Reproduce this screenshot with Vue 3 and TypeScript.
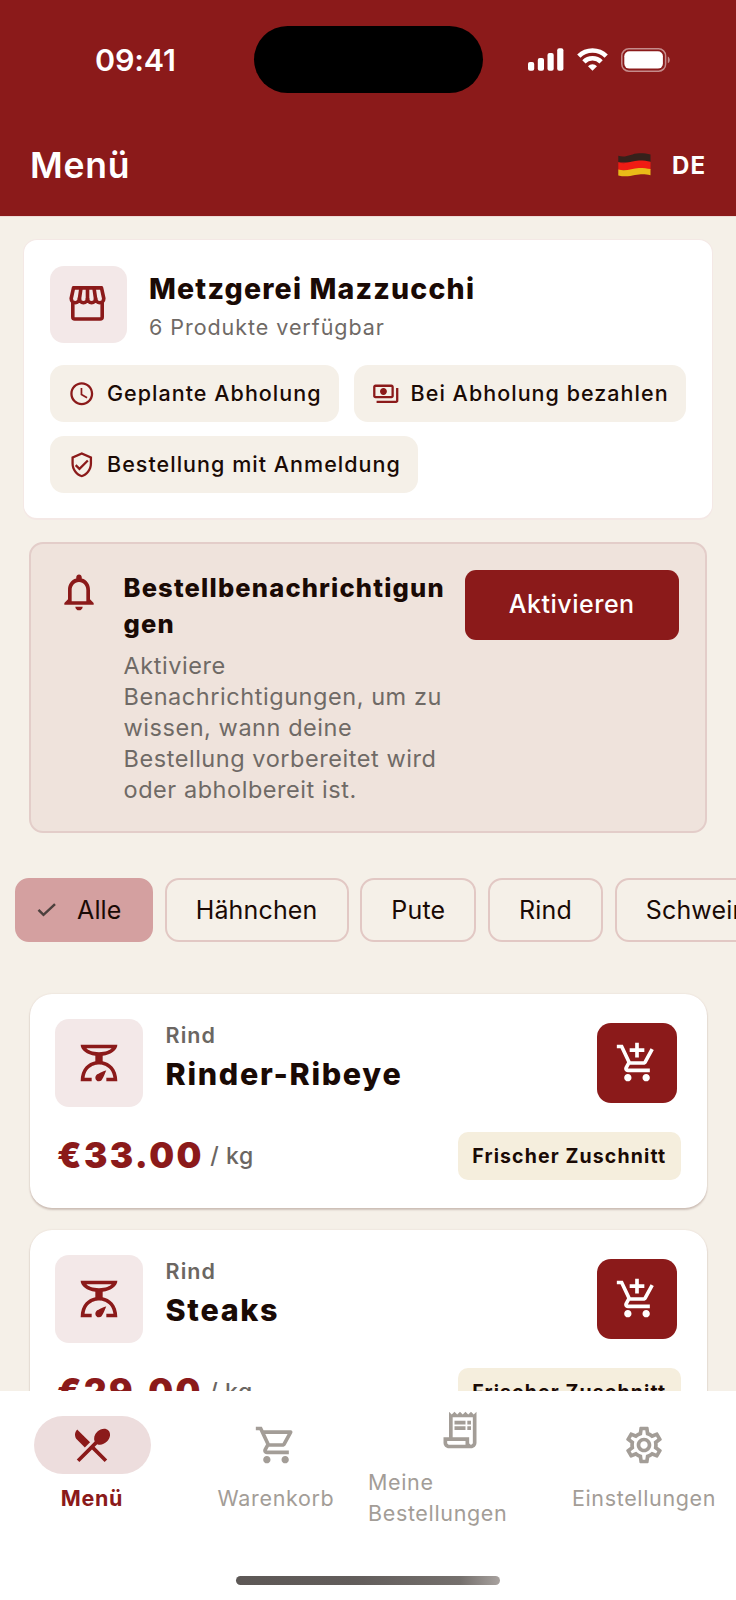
<script setup lang="ts">
interface Product {
  category: string
  name: string
  price: string
}

const icons = {
  clock:
    'M11.99 2C6.47 2 2 6.48 2 12s4.47 10 9.99 10C17.52 22 22 17.52 22 12S17.52 2 11.99 2zM12 20c-4.42 0-8-3.58-8-8s3.58-8 8-8 8 3.58 8 8-3.58 8-8 8zM12.5 7H11v6l5.25 3.15.75-1.23-4.5-2.67z',
  cash:
    'M19 14V6c0-1.1-.9-2-2-2H3c-1.1 0-2 .9-2 2v8c0 1.1.9 2 2 2h14c1.1 0 2-.9 2-2zm-2 0H3V6h14v8zm-7-7c-1.66 0-3 1.34-3 3s1.34 3 3 3 3-1.34 3-3-1.34-3-3-3zm13 0v11c0 1.1-.9 2-2 2H4v-2h17V7h2z',
  shield:
    'M12 1L3 5v6c0 5.55 3.84 10.74 9 12 5.16-1.26 9-6.45 9-12V5l-9-4zm7 10c0 4.52-2.98 8.69-7 9.93-4.02-1.24-7-5.41-7-9.93V6.3l7-3.11 7 3.11V11zm-11.59.59L6 13l4 4 8-8-1.41-1.42L10 14.17z',
  bell:
    'M12 22c1.1 0 2-.9 2-2h-4c0 1.1.9 2 2 2zm6-6v-5c0-3.07-1.63-5.64-4.5-6.32V4c0-.83-.67-1.5-1.5-1.5s-1.5.67-1.5 1.5v.68C7.64 5.36 6 7.92 6 11v5l-2 2v1h16v-1l-2-2zm-2 1H8v-6c0-2.48 1.51-4.5 4-4.5s4 2.02 4 4.5v6z',
  scale:
    'M14 11V8c4.56-.58 8-3.1 8-6H2c0 2.9 3.44 5.42 8 6v3c-3.68.73-8 3.61-8 11h6v-2H4.13c.93-6.83 6.65-7.2 7.87-7.2s6.94.37 7.87 7.2H16v2h6c0-7.39-4.32-10.27-8-11zM18.87 4c-.89 1-3.25 2.16-6.87 2.16S6.02 5 5.13 4h13.74zM12 22c-1.1 0-2-.9-2-2 0-.55.22-1.05.59-1.41C11.39 17.79 16 16 16 16s-1.79 4.61-2.59 5.41c-.36.37-.86.59-1.41.59z',
  addCart:
    'M11 9h2V6h3V4h-3V1h-2v3H8v2h3v3zm-4 9c-1.1 0-1.99.9-1.99 2S5.9 22 7 22s2-.9 2-2-.9-2-2-2zm10 0c-1.1 0-1.99.9-1.99 2s.89 2 1.99 2 2-.9 2-2-.9-2-2-2zm-8.9-5h7.45c.75 0 1.41-.41 1.75-1.03l3.86-7.01L19.42 4l-3.87 7H8.53L4.27 2H1v2h2l3.6 7.59-1.35 2.44C4.52 15.37 5.48 17 7 17h12v-2H7l1.1-2z',
  menu:
    'M8.1 13.34l2.83-2.83L3.91 3.5c-1.56 1.56-1.56 4.09 0 5.66l4.19 4.18zm6.78-1.81c1.53.71 3.68.21 5.27-1.38 1.91-1.91 2.28-4.65.81-6.12-1.46-1.46-4.2-1.1-6.12.81-1.59 1.59-2.09 3.74-1.38 5.27L3.7 19.87l1.41 1.41L12 14.41l6.88 6.88 1.41-1.41L13.41 13l1.47-1.47z',
  cart:
    'M15.55 13c.75 0 1.41-.41 1.75-1.03l3.58-6.49c.37-.66-.11-1.48-.87-1.48H5.21l-.94-2H1v2h2l3.6 7.59-1.35 2.44C4.52 15.37 5.48 17 7 17h12v-2H7l1.1-2h7.45zM6.16 6h12.15l-2.76 5H8.53L6.16 6zM7 18c-1.1 0-1.99.9-1.99 2S5.9 22 7 22s2-.9 2-2-.9-2-2-2zm10 0c-1.1 0-1.99.9-1.99 2s.89 2 1.99 2 2-.9 2-2-.9-2-2-2z',
  receipt:
    'M19.5 3.5L18 2l-1.5 1.5L15 2l-1.5 1.5L12 2l-1.5 1.5L9 2 7.5 3.5 6 2v14H3v3c0 1.66 1.34 3 3 3h12c1.66 0 3-1.34 3-3V2l-1.5 1.5zM15 20H6c-.55 0-1-.45-1-1v-1h10v2zm4-1c0 .55-.45 1-1 1s-1-.45-1-1v-3H8V5h11v14zM9 7h6v2H9zM16 7h2v2h-2zM9 10h6v2H9zM16 10h2v2h-2z',
  gear:
    'M19.43 12.98c.04-.32.07-.64.07-.98 0-.34-.03-.66-.07-.98l2.11-1.65c.19-.15.24-.42.12-.64l-2-3.46c-.09-.16-.26-.25-.44-.25-.06 0-.12.01-.17.03l-2.49 1c-.52-.4-1.08-.73-1.69-.98l-.38-2.65C14.46 2.18 14.25 2 14 2h-4c-.25 0-.46.18-.49.42l-.38 2.65c-.61.25-1.17.59-1.69.98l-2.49-1c-.06-.02-.12-.03-.18-.03-.17 0-.34.09-.43.25l-2 3.46c-.13.22-.07.49.12.64l2.11 1.65c-.04.32-.07.65-.07.98 0 .33.03.66.07.98l-2.11 1.65c-.19.15-.24.42-.12.64l2 3.46c.09.16.26.25.44.25.06 0 .12-.01.17-.03l2.49-1c.52.4 1.08.73 1.69.98l.38 2.65c.03.24.24.42.49.42h4c.25 0 .46-.18.49-.42l.38-2.65c.61-.25 1.17-.59 1.69-.98l2.49 1c.06.02.12.03.18.03.17 0 .34-.09.43-.25l2-3.46c.12-.22.07-.49-.12-.64l-2.11-1.65zm-1.98-1.71c.04.31.05.52.05.73 0 .21-.02.43-.05.73l-.14 1.13.89.7 1.08.84-.7 1.21-1.27-.51-1.04-.42-.9.68c-.43.32-.84.56-1.25.73l-1.06.43-.16 1.13-.2 1.35h-1.4l-.19-1.35-.16-1.13-1.06-.43c-.43-.18-.83-.41-1.23-.71l-.91-.7-1.06.43-1.27.51-.7-1.21 1.08-.84.89-.7-.14-1.13c-.03-.31-.05-.54-.05-.74s.02-.43.05-.73l.14-1.13-.89-.7-1.08-.84.7-1.21 1.27.51 1.04.42.9-.68c.43-.32.84-.56 1.25-.73l1.06-.43.16-1.13.2-1.35h1.39l.19 1.35.16 1.13 1.06.43c.43.18.83.41 1.23.71l.91.7 1.06-.43 1.27-.51.7 1.21-1.07.85-.89.7.14 1.13zM12 8c-2.21 0-4 1.79-4 4s1.79 4 4 4 4-1.79 4-4-1.79-4-4-4zm0 6c-1.1 0-2-.9-2-2s.9-2 2-2 2 .9 2 2-.9 2-2 2z',
}

const features = [
  { icon: icons.clock, label: 'Geplante Abholung' },
  { icon: icons.cash, label: 'Bei Abholung bezahlen' },
  { icon: icons.shield, label: 'Bestellung mit Anmeldung' },
]

const categories = ['Hähnchen', 'Pute', 'Rind', 'Schwein']

const products: Product[] = [
  { category: 'Rind', name: 'Rinder-Ribeye', price: '33.00' },
  { category: 'Rind', name: 'Steaks', price: '29.00' },
]

const tabs = [
  { icon: icons.menu, label: 'Menü', active: true },
  { icon: icons.cart, label: 'Warenkorb', active: false },
  { icon: icons.receipt, label: 'Meine Bestellungen', active: false },
  { icon: icons.gear, label: 'Einstellungen', active: false },
]
</script>

<template>
  <div class="screen">
    <header class="header">
      <div class="status">
        <span class="time">09:41</span>
        <span class="island"></span>
        <span class="indicators">
          <svg class="signal" width="36" height="23" viewBox="0 0 36 23">
            <rect x="0" y="14" width="6.2" height="8.8" rx="2" />
            <rect x="9.8" y="10" width="6.2" height="12.8" rx="2" />
            <rect x="19.5" y="5" width="6.2" height="17.8" rx="2" />
            <rect x="29.2" y="0.2" width="6.2" height="22.6" rx="2" />
          </svg>
          <svg class="wifi" width="31" height="23" viewBox="0 0 31 23">
            <g fill="none" stroke="#fff" stroke-width="4.6">
              <path d="M1.8 8.2a19.4 19.4 0 0 1 27.4 0" />
              <path d="M6.9 13.8a12.2 12.2 0 0 1 17.2 0" />
            </g>
            <path d="M15.5 22.8L11 18.2a6.4 6.4 0 0 1 9 0z" fill="#fff" />
          </svg>
          <svg class="battery" width="50" height="24" viewBox="0 0 50 24">
            <rect x=".8" y=".8" width="43.8" height="22.4" rx="7" fill="none" stroke="#c58b8b" stroke-width="1.5" />
            <rect x="3.3" y="3.2" width="38.6" height="17.4" rx="5" fill="#fff" />
            <path d="M46.8 8.4c2.6 1.3 2.6 5.6 0 6.9z" fill="#c58b8b" />
          </svg>
        </span>
      </div>
      <div class="title-row">
        <h1>Menü</h1>
        <div class="language">
          <svg width="33" height="24" viewBox="0 0 33 24">
            <path d="M.3 2.8C8 5.5 13 .6 21 .3c5-.1 8 .5 11.5 1.1V9H.3z" fill="#35211b" />
            <path d="M.3 9.3C8 12 14 7.6 21 7.5c5 0 8 .6 11.5 1.2V17H.3z" fill="#f01c14" />
            <path d="M.3 16.6C8 18.8 14 15.3 21 15c5 0 8 .5 11.5 1v6.2c-6-1.4-9.5-1.4-15.500-.1-6 1.400-11 1.800-16.700.3z" fill="#e9bb18" />
          </svg>
          <span>DE</span>
        </div>
      </div>
    </header>

    <main class="content">
      <section class="shop">
        <div class="shop-head">
          <span class="shop-icon">
            <svg width="37" height="35" viewBox="0 0 37 35">
              <g fill="none" stroke="currentColor" stroke-width="3.6" stroke-linejoin="round">
                <path d="M4.500 1.900h28L34.800 12.500a4 4.300 0 0 1-8.150 0a4.080 4.300 0 0 1-8.150 0a4.080 4.300 0 0 1-8.150 0a4.080 4.300 0 0 1-8.150 0z" stroke="none" />
                <path d="M4.500 1.900h28L34.800 12.500a4.070 4.300 0 0 1-8.150 0a4.070 4.300 0 0 1-8.150 0a4.070 4.300 0 0 1-8.150 0a4.070 4.300 0 0 1-8.150 0z" />
                <path d="M12 2l-1.600 11M18.500 2v11M25 2l1.600 11" />
                <path d="M3.800 16v15q0 2 2 2h25.400q2 0 2-2V16" />
              </g>
            </svg>
          </span>
          <div class="shop-text">
            <h2>Metzgerei Mazzucchi</h2>
            <p>6 Produkte verfügbar</p>
          </div>
        </div>
        <div class="features">
          <span v-for="f in features" :key="f.label" class="feature">
            <svg viewBox="0 0 24 24"><path :d="f.icon" /></svg><span>{{ f.label }}</span>
          </span>
        </div>
      </section>

      <section class="notice">
        <svg class="icon" viewBox="0 0 24 24"><path :d="icons.bell" /></svg>
        <div class="notice-text">
          <h3>Bestellbenachrichtigungen</h3>
          <p>Aktiviere Benachrichtigungen, um zu wissen, wann deine Bestellung vorbereitet wird oder abholbereit ist.</p>
        </div>
        <button type="button" class="activate">Aktivieren</button>
      </section>

      <nav class="filters">
        <span class="filter selected">
          <svg width="20" height="14" viewBox="0 0 20 14">
            <path d="M1.5 6.8l5 5L18 1.2" fill="none" stroke="#4c403d" stroke-width="2.5" />
          </svg>
          Alle
        </span>
        <span v-for="c in categories" :key="c" class="filter">{{ c }}</span>
      </nav>

      <section class="products">
        <article v-for="p in products" :key="p.name" class="product">
          <div class="product-head">
            <span class="product-icon">
              <svg class="icon" viewBox="0 0 24 24"><path :d="icons.scale" /></svg>
            </span>
            <div class="product-text">
              <p>{{ p.category }}</p>
              <h3>{{ p.name }}</h3>
            </div>
            <button type="button" class="add" aria-label="In den Warenkorb">
              <svg class="icon" viewBox="0 0 24 24"><path :d="icons.addCart" /></svg>
            </button>
          </div>
          <div class="product-foot">
            <span class="price">€{{ p.price }}</span>
            <span class="unit">/ kg</span>
            <span class="badge">Frischer Zuschnitt</span>
          </div>
        </article>
      </section>
    </main>

    <footer class="bottom">
      <nav class="tabs">
        <a v-for="t in tabs" :key="t.label" class="tab" :class="{ active: t.active }">
          <span class="pill"><svg class="icon" viewBox="0 0 24 24"><path :d="t.icon" /></svg></span>
          <span class="label">{{ t.label }}</span>
        </a>
      </nav>
      <div class="home"></div>
    </footer>
  </div>
</template>

<style>
body {
  margin: 0;
  background: #f5f0e8;
}
</style>

<style scoped>
.screen {
  display: flex;
  flex-direction: column;
  width: 736px;
  height: 1600px;
  overflow: hidden;
  background: #f5f0e8;
  color: #1a0a05;
  font-family: Inter, 'Liberation Sans', sans-serif;
}
h1, h2, h3, p { margin: 0; }
button { border: 0; padding: 0; font-family: inherit; }
svg { display: block; flex: none; fill: currentColor; }
.icon { width: 44px; height: 44px; }

.header {
  flex: none;
  box-sizing: border-box;
  height: 216px;
  background: #8b1a1a;
  color: #fff;
  box-shadow: 0 1px 0 #efdcd8;
}
.status {
  display: grid;
  grid-template-columns: 253.5px 229.5px 1fr;
  align-items: center;
  height: 119px;
}
.time {
  padding: 0 0 0 95px;
  font-size: 30.5px;
  font-weight: 600;
  letter-spacing: -0.2px;
}
.island { height: 67.5px; border-radius: 34px; background: #000; }
.indicators { display: flex; align-items: center; padding-left: 44.5px; }
.wifi { margin-left: 13px; }
.battery { margin-left: 13.5px; }
.title-row {
  display: flex;
  align-items: center;
  justify-content: space-between;
  height: 92px;
  padding: 0 29.5px 0 30px;
}
h1 { margin-top: 2px; font-size: 35.5px; font-weight: 600; letter-spacing: 0.8px; line-height: 44px; }
.language { display: flex; align-items: center; gap: 20.5px; font-size: 24px; font-weight: 700; letter-spacing: 1.3px; }

.content { flex: 1; min-height: 0; overflow: hidden; }
.shop {
  margin: 23px 23px 0;
  padding: 26px 26px 25px;
  border: 1px solid #f4e8e5;
  border-bottom-width: 2px;
  border-radius: 14px;
  background: #fff;
}
.shop-head { display: flex; gap: 22.5px; height: 77px; }
.shop-icon {
  display: grid;
  place-items: center;
  box-sizing: border-box;
  width: 76.5px;
  height: 76.5px;
  padding: 0 1.5px 1.5px 0;
  border-radius: 14px;
  background: #f3e8e8;
  color: #8b1a1a;
}
.shop-text { padding-top: 4.5px; }
h2 { font-size: 28.5px; font-weight: 800; line-height: 36px; letter-spacing: 1.18px; }
.shop-text p { margin-top: 5px; font-size: 21.5px; line-height: 30px; letter-spacing: 0.95px; color: #6f6a66; }
.features { display: flex; flex-wrap: wrap; gap: 14px 14.5px; margin: 22px -8px 0 0; }
.feature {
  display: flex;
  align-items: center;
  gap: 11.5px;
  height: 57px;
  padding: 0 17.5px 0 18px;
  border-radius: 14px;
  background: #f5f0e8;
  font-size: 21.5px;
  font-weight: 500;
  letter-spacing: 1.03px;
  white-space: nowrap;
}
.feature span { margin-top: -1px; }
.feature svg { width: 27.5px; height: 27.5px; color: #8b1a1a; }

.notice {
  display: flex;
  align-items: flex-start;
  box-sizing: border-box;
  height: 291px;
  margin: 22px 29px 0;
  padding: 26px;
  border: 2px solid #e3cdc9;
  border-radius: 14px;
  background: #efe3dc;
}
.notice > .icon { color: #8b1a1a; }
.notice-text { flex: 1; min-width: 0; margin: 0 16px 0 22.5px; }
.notice h3 { font-size: 25.5px; font-weight: 800; line-height: 36.4px; letter-spacing: 1.18px; overflow-wrap: anywhere; }
.notice p { margin-top: 7px; font-size: 23.5px; line-height: 31.1px; letter-spacing: 0.55px; color: #6f6a66; }
.activate {
  flex: none;
  width: 214.5px;
  height: 69.5px;
  padding-bottom: 2px;
  border-radius: 11px;
  background: #8b1a1a;
  color: #fff;
  font-size: 25px;
  font-weight: 500;
  letter-spacing: 0.5px;
}

.filters { display: flex; gap: 11.5px; margin-top: 45px; padding-left: 15px; }
.filter {
  display: flex;
  flex: none;
  align-items: center;
  box-sizing: border-box;
  height: 64px;
  padding: 0 29.2px 1px;
  border: 2px solid #e2c8c4;
  border-radius: 14px;
  font-size: 25px;
  letter-spacing: 0.15px;
}
.filter.selected {
  gap: 20px;
  width: 138px;
  padding: 0 20px 1px;
  border-color: #d4a0a0;
  background: #d4a0a0;
}
.filter.selected svg { margin-top: 1px; }

.products { display: flex; flex-direction: column; gap: 22px; margin: 52px 29.5px 0; }
.product {
  box-sizing: border-box;
  height: 214px;
  padding: 25px 25.5px 28px;
  border-radius: 22px;
  background: #fff;
  box-shadow: 0 2px 2px rgba(60, 20, 10, 0.2), 0 0 2px rgba(120, 40, 30, 0.12);
}
.product-head { display: flex; align-items: center; height: 88px; }
.product-icon {
  display: grid;
  place-items: center;
  width: 88px;
  height: 88px;
  border-radius: 14px;
  background: #f3e8e8;
  color: #8b1a1a;
}
.product-text { flex: 1; align-self: flex-start; padding: 1px 0 0 22.5px; }
.product-text p { font-size: 21.5px; font-weight: 600; line-height: 30px; letter-spacing: 1.1px; color: #6b6662; }
.product-text h3 { margin-top: 4px; font-size: 30.5px; font-weight: 800; line-height: 40px; letter-spacing: 1.7px; }
.add {
  display: grid;
  place-items: center;
  width: 80.5px;
  height: 80.5px;
  margin-right: 4px;
  border-radius: 14px;
  background: #8b1a1a;
  color: #fff;
}
.product-foot { display: flex; align-items: center; height: 48px; margin-top: 25px; }
.price { padding-left: 2px; margin-top: -2px; font-size: 35px; font-weight: 900; letter-spacing: 2.4px; color: #8b1a1a; }
.unit { margin-left: 6.5px; font-size: 23px; font-weight: 500; letter-spacing: 0.6px; color: #6b6662; }
.badge {
  display: grid;
  place-items: center;
  width: 223.5px;
  height: 48px;
  margin-left: auto;
  border-radius: 10px;
  background: #f5eedd;
  font-size: 19.5px;
  font-weight: 700;
  letter-spacing: 1.12px;
}

.bottom { flex: none; height: 209px; background: #fff; }
.tabs { display: grid; grid-template-columns: repeat(4, 184px); height: 147px; }
.tab { display: flex; flex-direction: column; align-items: center; justify-content: center; gap: 8px; color: #a39d97; }
.pill { display: grid; place-items: center; width: 117px; height: 58px; border-radius: 29px; }
.label { padding-top: 0.6px; margin-bottom: -0.6px; font-size: 21.5px; line-height: 31px; letter-spacing: 0.65px; }
.tab.active { color: #8b1a1a; }
.tab.active .pill { background: #eddddd; }
.tab.active .label { font-weight: 700; letter-spacing: 0.7px; }
.home {
  width: 264px;
  height: 9px;
  margin: 38px auto 0;
  border-radius: 5px;
  background: linear-gradient(90deg, #5d5856, #625d5b 45%, #75706d 85%, #a8a29f);
}
</style>
